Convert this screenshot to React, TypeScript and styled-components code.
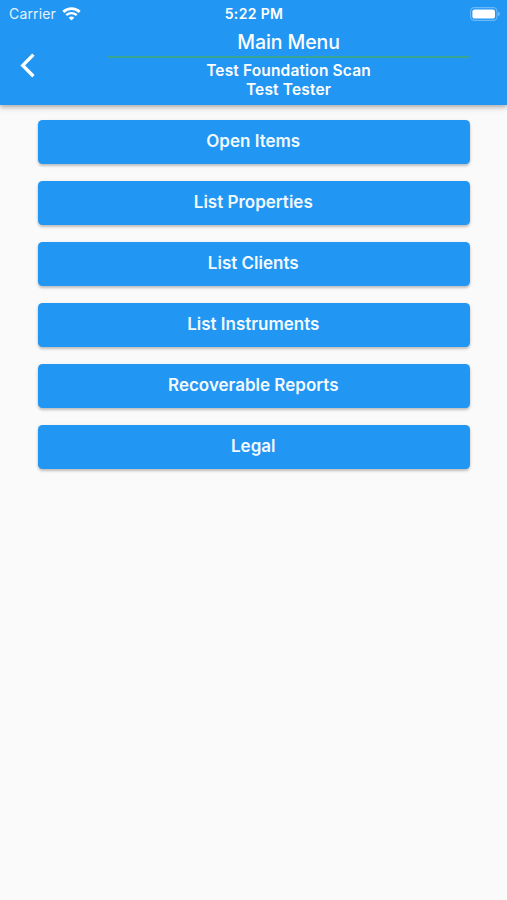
import React from "react";
import styled, { createGlobalStyle } from "styled-components";

const GlobalStyle = createGlobalStyle`
  * { box-sizing: border-box; }
  body {
    margin: 0;
    background: #fafafa;
    font-family: Inter, "Liberation Sans", sans-serif;
    color: #fff;
  }
`;

const Screen = styled.div`
  display: flex;
  flex-direction: column;
  height: 900px;
  background: #fafafa;
`;

const Header = styled.header`
  height: 104.5px;
  flex: none;
  background: #2196f3;
  box-shadow: 0 2px 4px rgba(0, 0, 0, 0.22), 0 3px 7px rgba(0, 0, 0, 0.12);
`;

const StatusBar = styled.div`
  display: grid;
  grid-template-columns: 1fr auto 1fr;
  align-items: center;
  height: 27px;
  padding: 0 7px 0 9px;
`;

const Carrier = styled.div`
  display: flex;
  align-items: center;
  gap: 6px;
  font-size: 14px;
  letter-spacing: 0.15px;
  color: #e6f3fe;
`;

const Clock = styled.div`
  margin-left: -1px;
  font-size: 14px;
  font-weight: 600;
  letter-spacing: 0.35px;
`;

const Battery = styled.svg`
  justify-self: end;
`;

const NavBar = styled.div`
  display: grid;
  grid-template-columns: 107px 363px;
`;

const BackButton = styled.button`
  display: flex;
  align-items: center;
  width: 56px;
  height: 77px;
  padding: 0 0 0 20px;
  border: 0;
  background: none;
  color: inherit;
`;

const Titles = styled.div`
  text-align: center;
`;

const Title = styled.h1`
  margin: 0;
  height: 31px;
  padding-top: 2px;
  border-bottom: 2px solid #38a494;
  font-size: 19.5px;
  font-weight: 500;
  line-height: 26px;
  letter-spacing: -0.1px;
`;

const Subtitle = styled.div`
  padding-top: 3px;
  font-size: 15.5px;
  font-weight: 600;
  line-height: 19px;
  letter-spacing: 0.15px;
`;

const Menu = styled.nav`
  display: flex;
  flex-direction: column;
  gap: 17px;
  padding: 15px 37px 0 37.5px;
`;

const MenuButton = styled.button`
  height: 44px;
  padding: 0 1px 1px 0;
  border: 0;
  border-radius: 4.5px;
  background: #2196f3;
  box-shadow: 0 2px 2.5px rgba(0, 0, 0, 0.2), 0 1px 4px rgba(0, 0, 0, 0.08);
  color: #f2faff;
  font-family: inherit;
  font-size: 17px;
  font-weight: 600;
  line-height: 43px;
  letter-spacing: 0;
`;

const items = [
  "Open Items",
  "List Properties",
  "List Clients",
  "List Instruments",
  "Recoverable Reports",
  "Legal",
];

export default function App() {
  return (
    <Screen>
      <GlobalStyle />
      <Header>
        <StatusBar>
          <Carrier>
            <span>Carrier</span>
            <svg width="19" height="14" viewBox="0 0 19 14" fill="none">
              <path d="M1.3 4.9C6 .6 13 .6 17.7 4.9" stroke="#fff" strokeWidth="2.8" />
              <path d="M4.3 8.2C7.3 5.4 11.7 5.4 14.7 8.2" stroke="#fff" strokeWidth="2.4" />
              <path d="M6.7 10.7C8.4 9.2 10.6 9.2 12.3 10.7L9.5 13.6Z" fill="#fff" />
            </svg>
          </Carrier>
          <Clock>5:22 PM</Clock>
          <Battery width="30" height="14" viewBox="0 0 30 14">
            <rect x="0.6" y="0.6" width="26.4" height="12.8" rx="3.8" fill="none" stroke="#6db8f7" strokeWidth="1.1" />
            <rect x="2.4" y="2.4" width="22.6" height="9.2" rx="2.2" fill="#fff" />
            <path d="M28.2 4.8C30.2 5.6 30.2 8.4 28.2 9.2Z" fill="#84c4f8" />
          </Battery>
        </StatusBar>
        <NavBar>
          <BackButton aria-label="Back">
            <svg width="16" height="25" viewBox="0 0 16 25" fill="none">
              <path d="M13.4 1.6L2.8 12.4L13.4 23.2" stroke="#fff" strokeWidth="3.4" />
            </svg>
          </BackButton>
          <Titles>
            <Title>Main Menu</Title>
            <Subtitle>
              Test Foundation Scan
              <br />
              Test Tester
            </Subtitle>
          </Titles>
        </NavBar>
      </Header>
      <Menu>
        {items.map((label) => (
          <MenuButton key={label}>{label}</MenuButton>
        ))}
      </Menu>
    </Screen>
  );
}
